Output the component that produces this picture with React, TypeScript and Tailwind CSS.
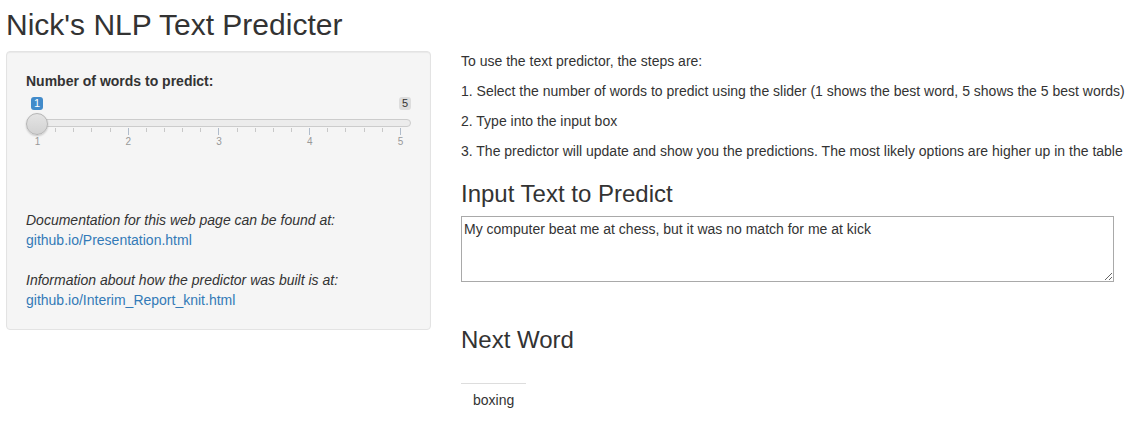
import React from 'react';

const labels = [1, 2, 3, 4, 5];
// 4 intervals, 5 sub-steps each -> 21 grid marks
const marks = Array.from({ length: 21 }, (_, i) => i);

function Slider() {
  return (
    <div className="relative h-[55px]">
      {/* min / max badges */}
      <div className="flex h-[15px] w-[385px] items-start justify-between pl-[5px] pt-px">
        <span className="rounded-[3px] bg-[#428bca] px-[3px] text-[11px] leading-[13px] text-white">1</span>
        <span className="rounded-[3px] bg-[#dddddd] px-[3px] text-[11px] leading-[13px] text-[#333]">5</span>
      </div>

      {/* track */}
      <div className="ml-[4px] mt-[8px] h-[8px] w-[381px] rounded-full border border-[#cccccc] bg-[#ececec]"></div>

      {/* grid */}
      <div className="ml-[11px] mt-px flex h-[7px] w-[364px] items-start justify-between">
        {marks.map((m) =>
          m % 5 === 0 ? (
            <div key={m} className="h-[7px] w-px bg-[#b0bccb]"></div>
          ) : (
            <div key={m} className="h-[4px] w-px bg-[#c8c8c8]"></div>
          )
        )}
      </div>
      <div className="ml-[1.5px] mt-[2px] flex w-[383px] justify-between">
        {labels.map((t) => (
          <span key={t} className="w-[20px] text-center text-[10px] leading-[10px] text-[#999]">
            {t}
          </span>
        ))}
      </div>

      {/* handle sits over the track */}
      <div className="absolute left-0 top-[17px] h-[22px] w-[22px] rounded-full border border-[#b5b5b5] bg-gradient-to-b from-[#e4e4e4] to-[#d2d2d2] shadow-[0_1px_2px_rgba(0,0,0,0.2)]"></div>
    </div>
  );
}

export default function App() {
  return (
    <div className="min-h-screen bg-white pl-[6px] pt-[8px] font-['Liberation_Sans',Arial,sans-serif] text-[14px] leading-5 text-[#333]">
      <h2 className="mb-[10px] text-[30px] leading-[33px]">Nick's NLP Text Predicter</h2>

      <div className="flex items-start gap-[30px]">
        {/* Sidebar */}
        <div className="w-[425px] rounded-[4px] border border-[#e3e3e3] bg-[#f5f5f5] p-[19px] shadow-[inset_0_1px_1px_rgba(0,0,0,0.05)]">
          <label className="mb-[5px] block font-bold">Number of words to predict:</label>
          <Slider />

          <div className="mt-[59px]">
            <p className="italic">Documentation for this web page can be found at:</p>
            <a className="text-[#337ab7]">github.io/Presentation.html</a>
            <p className="mt-5 italic">Information about how the predictor was built is at:</p>
            <a className="text-[#337ab7]">github.io/Interim_Report_knit.html</a>
          </div>
        </div>

        {/* Main */}
        <div className="w-[675px] whitespace-nowrap">
          <p className="mb-[10px]">To use the text predictor, the steps are:</p>
          <p className="mb-[10px]">
            1. Select the number of words to predict using the slider (1 shows the best word, 5 shows the 5 best words)
          </p>
          <p className="mb-[10px]">2. Type into the input box</p>
          <p>3. The predictor will update and show you the predictions. The most likely options are higher up in the table</p>

          <h3 className="mb-[9px] mt-[20px] text-[24px] leading-[26px]">Input Text to Predict</h3>
          <textarea
            className="block h-[66px] w-[653px] resize border border-[#a9a9a9] px-[2px] pt-[4px] text-[14px] leading-4 text-[#333] outline-none"
            defaultValue="My computer beat me at chess, but it was no match for me at kick"
          ></textarea>

          <h3 className="mb-[10px] mt-[45px] text-[24px] leading-[26px]">Next Word</h3>
          <table className="mt-[30px] border-collapse">
            <tbody>
              <tr>
                <td className="border-t border-[#dddddd] px-3 pb-[8px] pt-[6px]">boxing</td>
              </tr>
            </tbody>
          </table>
        </div>
      </div>
    </div>
  );
}
